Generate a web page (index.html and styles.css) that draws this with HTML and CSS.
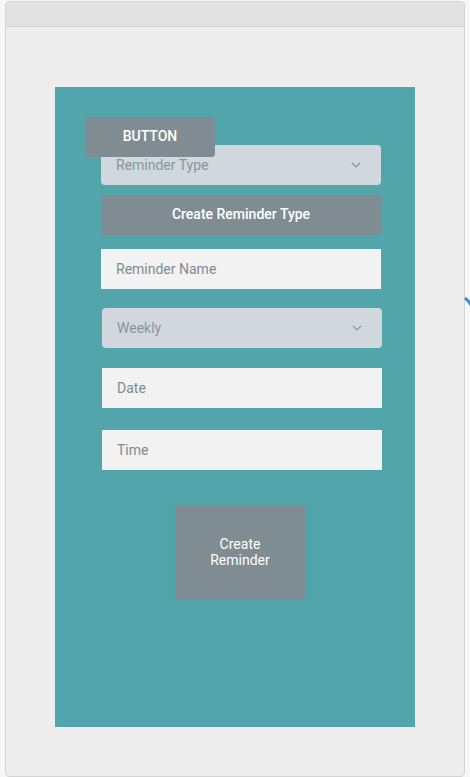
FILE: index.html
```html
<!DOCTYPE html>
<html>
<head>
<meta charset="utf-8">
<link rel="stylesheet" href="styles.css">
</head>
<body>
<div class="frame">
  <div class="frame-header"></div>
  <div class="frame-body">
    <div class="panel">
      <button class="overlay-btn">BUTTON</button>
      <div class="field select ml46">
        <span class="placeholder">Reminder Type</span>
        <svg class="chev" width="10" height="6" viewBox="0 0 10 6"><path d="M1 1l4 4 4-4" fill="none" stroke="#8a959b" stroke-width="1.2"/></svg>
      </div>
      <button class="wide-btn ml46">Create Reminder Type</button>
      <div class="field input ml46 g14">
        <span class="placeholder">Reminder Name</span>
      </div>
      <div class="field select ml47 g19">
        <span class="placeholder">Weekly</span>
        <svg class="chev" width="10" height="6" viewBox="0 0 10 6"><path d="M1 1l4 4 4-4" fill="none" stroke="#8a959b" stroke-width="1.2"/></svg>
      </div>
      <div class="field input ml47 g20">
        <span class="placeholder">Date</span>
      </div>
      <div class="field input ml47 g22">
        <span class="placeholder">Time</span>
      </div>
      <button class="big-btn">Create<br>Reminder</button>
    </div>
  </div>
</div>
<svg class="edge-arc" width="8" height="12" viewBox="0 0 8 12"><path d="M1 1 Q4 3 7 8" fill="none" stroke="#3a8fd8" stroke-width="3"/></svg>
</body>
</html>
```

FILE: styles.css
```css
html, body {
  margin: 0;
  padding: 0;
  background: #f7f7f7;
  font-family: Roboto, "Liberation Sans", sans-serif;
  overflow: hidden;
}
.frame {
  margin: 1px 0 0 5px;
  width: 458px;
  height: 774px;
  border: 1px solid #d4d4d4;
  border-radius: 4px;
  background: #ededed;
  overflow: hidden;
  display: flex;
  flex-direction: column;
}
.frame-header {
  height: 24px;
  background: #e2e2e2;
  border-bottom: 1px solid #d2d2d2;
  flex: none;
}
.frame-body {
  padding: 60px 0 0 49px;
}
.panel {
  position: relative;
  width: 360px;
  height: 640px;
  background: #52a5aa;
  box-sizing: border-box;
  padding-top: 58px;
  display: flex;
  flex-direction: column;
}
.overlay-btn {
  position: absolute;
  left: 30px;
  top: 30px;
  width: 130px;
  height: 40px;
  border: none;
  border-radius: 3px;
  background: #7f8c91;
  color: #fff;
  font-family: Roboto, "Liberation Sans", sans-serif;
  font-size: 14px;
  font-weight: 500;
  padding: 0 0 2px;
  z-index: 2;
}
.field {
  width: 280px;
  height: 40px;
  box-sizing: border-box;
  display: flex;
  align-items: center;
  justify-content: space-between;
  padding: 0 20px 0 15px;
  font-size: 14px;
  flex: none;
}
.select {
  background: #d0d8dd;
  border-radius: 4px;
}
.input {
  background: #f2f2f2;
}
.placeholder {
  color: #7f8b91;
}
.select .placeholder {
  color: #8a959b;
}
.chev {
  display: block;
}
.ml46 { margin-left: 46px; }
.ml47 { margin-left: 47px; }
.g14 { margin-top: 14px; }
.g19 { margin-top: 19px; }
.g20 { margin-top: 20px; }
.g22 { margin-top: 22px; }
.wide-btn {
  margin-top: 10px;
  width: 280px;
  height: 40px;
  border: none;
  border-radius: 3px;
  background: #7f8c91;
  color: #fff;
  font-family: Roboto, "Liberation Sans", sans-serif;
  font-size: 14px;
  font-weight: 500;
  padding: 0 0 2px;
  flex: none;
}
.big-btn {
  margin: 36px 0 0 120px;
  width: 130px;
  height: 94px;
  border: none;
  background: #7f8c91;
  color: #fff;
  font-family: Roboto, "Liberation Sans", sans-serif;
  font-size: 14px;
  line-height: 16px;
  font-weight: 400;
  padding: 0 0 2px;
  flex: none;
}
.edge-arc {
  position: absolute;
  left: 464px;
  top: 297px;
}
```
